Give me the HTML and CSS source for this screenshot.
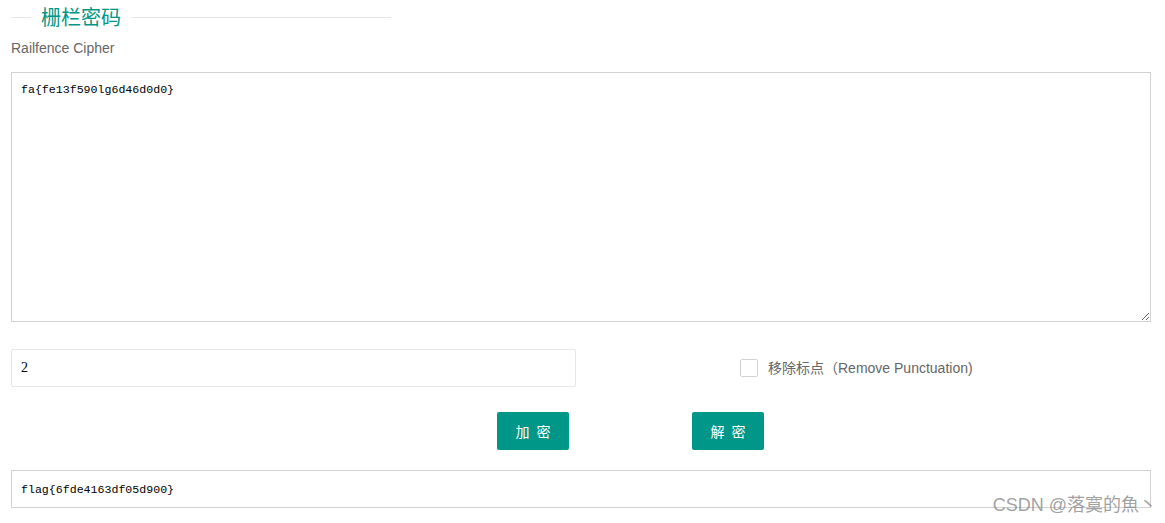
FILE: index.html
```html
<!DOCTYPE html>
<html>
<head>
<meta charset="utf-8">
<link rel="stylesheet" href="styles.css">
</head>
<body>
<div class="page">
  <div class="legend">
    <span class="legend-line short"></span>
    <span class="legend-text">栅栏密码</span>
    <span class="legend-line long"></span>
  </div>
  <div class="subtitle">Railfence Cipher</div>
  <textarea class="input-area">fa{fe13f590lg6d46d0d0}</textarea>
  <div class="row-options">
    <input class="key-input" type="text" value="2">
    <label class="check">
      <span class="check-box"></span>
      <span class="check-label">移除标点（Remove Punctuation)</span>
    </label>
  </div>
  <div class="row-buttons">
    <button class="btn">加 密</button>
    <button class="btn">解 密</button>
  </div>
  <input class="result" type="text" value="flag{6fde4163df05d900}">
</div>
<div class="watermark">CSDN @落寞的魚丶</div>
</body>
</html>
```

FILE: styles.css
```css
html, body {
  margin: 0;
  padding: 0;
  background: #fff;
}
body {
  font-family: "Liberation Sans", "Noto Sans CJK SC", sans-serif;
  position: relative;
  width: 1165px;
  height: 523px;
  overflow: hidden;
}
.page {
  padding: 7px 0 0 11px;
  width: 1140px;
}
.legend {
  display: flex;
  align-items: center;
  width: 380px;
  height: 20px;
}
.legend-line {
  height: 1px;
  background: #e6e6e6;
}
.legend-line.short { width: 20px; }
.legend-line.long { flex: 1; }
.legend-text {
  padding: 0 10px;
  font-size: 20px;
  line-height: 20px;
  color: #009688;
  font-family: "Noto Sans CJK SC", sans-serif;
}
.subtitle {
  margin-top: 13px;
  font-size: 14px;
  line-height: 16px;
  color: #666;
}
.input-area {
  display: block;
  box-sizing: border-box;
  margin-top: 16px;
  width: 1140px;
  height: 250px;
  border: 1px solid #d2d2d2;
  padding: 9px 9px;
  font-family: "Liberation Mono", "Noto Sans CJK SC", monospace;
  font-size: 11.6px;
  line-height: 16px;
  color: #000;
  resize: both;
  outline: none;
}
.row-options {
  display: flex;
  align-items: center;
  margin-top: 27px;
  height: 38px;
}
.key-input {
  box-sizing: border-box;
  width: 565px;
  height: 38px;
  border: 1px solid #e6e6e6;
  border-radius: 2px;
  padding: 0 9px;
  font-family: "Liberation Serif", serif;
  font-size: 14px;
  color: #000;
  outline: none;
}
.check {
  display: flex;
  align-items: center;
  margin-left: 164px;
}
.check-box {
  box-sizing: border-box;
  width: 18px;
  height: 18px;
  border: 1px solid #d2d2d2;
  border-radius: 2px;
  background: #fff;
}
.check-label {
  margin-left: 10px;
  margin-top: -2px;
  font-size: 14px;
  color: #666;
}
.row-buttons {
  display: flex;
  margin-top: 25px;
  padding-left: 486px;
  gap: 123px;
  height: 38px;
}
.btn {
  width: 72px;
  height: 38px;
  border: none;
  border-radius: 2px;
  background: #009688;
  color: #fff;
  font-family: "Noto Sans CJK SC", sans-serif;
  font-size: 14px;
  letter-spacing: 2px;
  padding: 0 0 0 2px;
}
.result {
  display: block;
  box-sizing: border-box;
  margin-top: 20px;
  width: 1140px;
  height: 38px;
  border: 1px solid #d2d2d2;
  padding: 0 9px;
  font-family: "Liberation Mono", "Noto Sans CJK SC", monospace;
  font-size: 11.6px;
  color: #000;
  outline: none;
}
.watermark {
  position: absolute;
  right: 8px;
  bottom: 7px;
  font-size: 18px;
  color: rgba(120, 120, 120, 0.7);
  font-family: "Liberation Sans", "Noto Sans CJK SC", sans-serif;
}
```
